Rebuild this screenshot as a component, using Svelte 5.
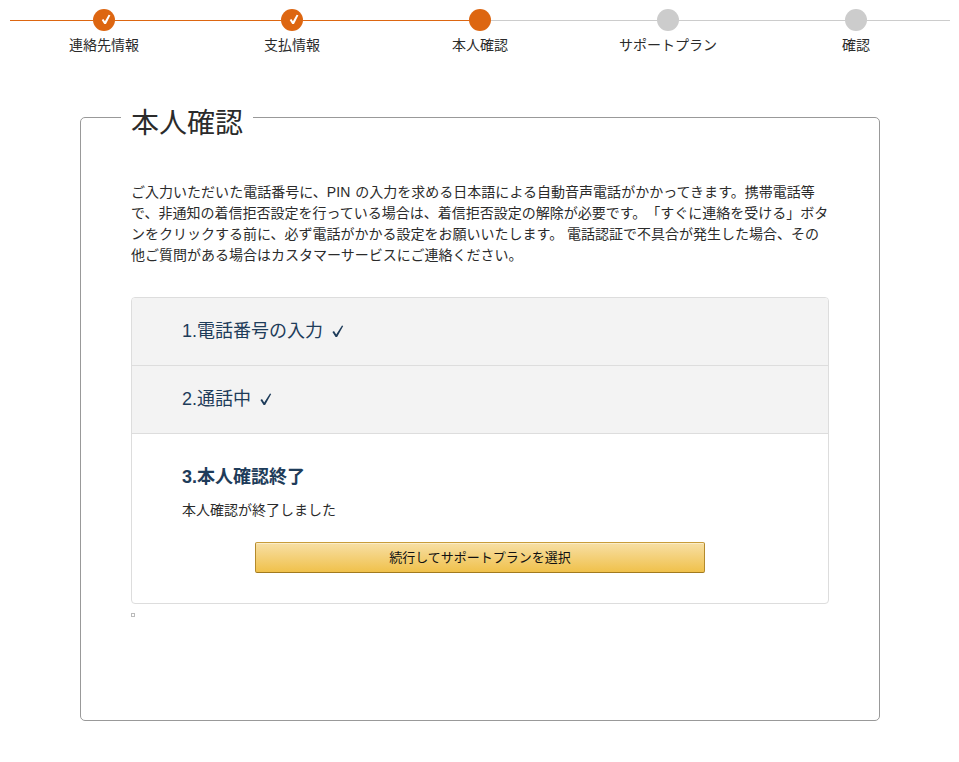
<script>
  const steps = [
    { label: "連絡先情報", state: "done" },
    { label: "支払情報", state: "done" },
    { label: "本人確認", state: "current" },
    { label: "サポートプラン", state: "todo" },
    { label: "確認", state: "todo" },
  ];

  const description = [
    "ご入力いただいた電話番号に、PIN の入力を求める日本語による自動音声電話がかかってきます。携帯電話等",
    "で、非通知の着信拒否設定を行っている場合は、着信拒否設定の解除が必要です。「すぐに連絡を受ける」ボタ",
    "ンをクリックする前に、必ず電話がかかる設定をお願いいたします。 電話認証で不具合が発生した場合、その",
    "他ご質問がある場合はカスタマーサービスにご連絡ください。",
  ];

  const finished = ["1.電話番号の入力", "2.通話中"];
</script>

<ol class="steps">
  {#each steps as step}
    <li class={step.state}>
      <div class="track">
        <span class="line"></span>
        <span class="dot">
          {#if step.state === "done"}
            <svg width="22" height="22" viewBox="0 0 22 22">
              <path d="M8.7 10.9 L10.4 10 L11.9 12.2 L15.6 5.7 L17.4 6.2 L13 15 L11.2 15 Z" fill="#fff" />
            </svg>
          {/if}
        </span>
        <span class="line after"></span>
      </div>
      <span class="label">{step.label}</span>
    </li>
  {/each}
</ol>

<fieldset>
  <legend>本人確認</legend>
  <p class="description">
    {#each description as line}
      <span>{line}</span>
    {/each}
  </p>

  <div class="panels">
    {#each finished as title}
      <h3 class="finished">
        <span>{title}</span>
        <svg width="12" height="14" viewBox="0 0 12 14">
          <path d="M0.4 6.9 L2 6 L4.2 9.4 L10 0.6 L11.2 1 L5.1 12.1 L3.6 12.1 Z" fill="currentColor" />
        </svg>
      </h3>
    {/each}
    <section>
      <h3>3.本人確認終了</h3>
      <p>本人確認が終了しました</p>
      <button type="button">続行してサポートプランを選択</button>
    </section>
  </div>
  <div class="frame"></div>
</fieldset>

<style>
  :global(body) {
    background: #fff;
    color: #2b2b2b;
    font-family: "Liberation Sans", "Noto Sans CJK JP", sans-serif;
    font-size: 14px;
    text-spacing-trim: space-all;
  }

  .steps {
    display: flex;
    list-style: none;
    width: 940px;
    margin: 0 0 0 10px;
    padding: 9px 0 0;
  }

  li {
    flex: 1;
    text-align: center;
  }

  .track {
    display: flex;
    align-items: center;
    height: 22px;
  }

  .line {
    flex: 1;
    height: 1px;
    background: #ccc;
  }

  .dot {
    width: 22px;
    height: 22px;
    border-radius: 50%;
    background: #ccc;
  }

  .done .line,
  .done .dot,
  .current .line:not(.after),
  .current .dot {
    background: #dd6611;
  }

  svg {
    display: block;
  }

  .label {
    display: block;
    line-height: 21px;
    margin-top: 4px;
  }

  fieldset {
    box-sizing: border-box;
    width: 800px;
    height: 621px;
    margin: 44px 0 0 80px;
    padding: 47px 50px 0;
    border: 1px solid #999;
    border-radius: 5px;
  }

  legend {
    height: 35px;
    margin-left: -10px;
    padding: 0 10px;
    font-size: 28px;
    line-height: 48px;
  }

  p {
    margin: 0;
  }

  .description {
    line-height: 21px;
  }

  .description span {
    display: block;
    white-space: nowrap;
  }

  .description span:first-child {
    word-spacing: 1px;
    letter-spacing: 0.02px;
  }

  .panels {
    box-sizing: border-box;
    height: 307px;
    margin-top: 31px;
    border: 1px solid #ddd;
    border-radius: 4px;
    overflow: hidden;
  }

  h3 {
    margin: 0;
    color: #1e3c5a;
    font-size: 18px;
  }

  .finished {
    display: flex;
    align-items: center;
    gap: 9px;
    height: 67px;
    padding-left: 50px;
    border-bottom: 1px solid #ddd;
    background: #f3f3f3;
    font-weight: normal;
  }

  .finished span {
    line-height: 27px;
  }

  section {
    padding: 30px 50px 0;
  }

  section h3 {
    line-height: 27px;
  }

  section p {
    margin-top: 9px;
    line-height: 21px;
  }

  button {
    display: block;
    width: 450px;
    height: 31px;
    margin: 21px auto 0;
    padding: 0 0 3px;
    border: 1px solid;
    border-color: #c89c3a #b48a2c #a27a1e;
    border-radius: 2px;
    background: linear-gradient(to bottom, #f7dfa5, #f0c14b);
    box-shadow: inset 0 1px 0 #fbedc8;
    color: #111;
    font-family: inherit;
    font-size: 13px;
  }

  .frame {
    box-sizing: border-box;
    width: 4px;
    height: 4px;
    margin-top: 9px;
    border: 1px solid #bbb;
  }
</style>
